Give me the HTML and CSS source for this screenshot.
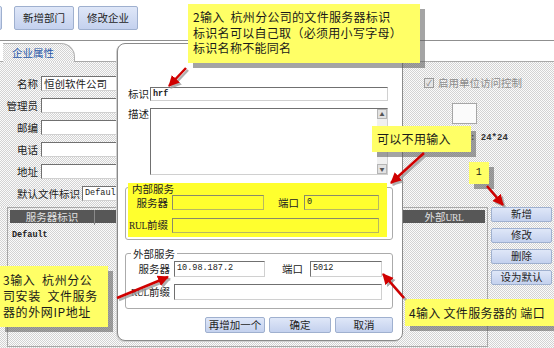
FILE: index.html
```html
<!DOCTYPE html>
<html lang="zh-CN">
<head>
    <meta charset="UTF-8">
    <title>企业属性 - 文件服务器</title>
    <link rel="stylesheet" href="styles.css">
</head>
<body>
<div class="page">
    <div class="toolbar">
        <button class="btn btn-top btn-cut"></button>
        <button class="btn btn-top">新增部门</button>
        <button class="btn btn-top">修改企业</button>
    </div>
    <div class="tabs">
        <div class="tab"><span>企业属性</span></div>
    </div>

    <div class="upper">
        <div class="form dots">
            <div class="frm-row"><label>名称</label><div class="inp">恒创软件公司</div></div>
            <div class="frm-row"><label>管理员</label><div class="inp"></div></div>
            <div class="frm-row"><label>邮编</label><div class="inp"></div></div>
            <div class="frm-row"><label>电话</label><div class="inp"></div></div>
            <div class="frm-row"><label>地址</label><div class="inp"></div></div>
            <div class="frm-row frm-row-wide"><label>默认文件标识</label><div class="inp val">Default</div></div>
        </div>
        <div class="side dots">
            <div class="check-row"><span class="check">&#10003;</span><span>启用单位访问控制</span></div>
            <div class="icon-box"></div>
            <div class="size-text">: 24*24</div>
        </div>
    </div>

    <div class="lower dots">
        <div class="grid">
            <div class="grid-head">
                <div class="gh">服务器标识</div>
                <div class="gh"></div>
                <div class="gh">外部<span class="lat">URL</span></div>
            </div>
            <div class="grid-row val">Default</div>
        </div>
        <div class="actions">
            <button class="btn btn-small">新增</button>
            <button class="btn btn-small">修改</button>
            <button class="btn btn-small">删除</button>
            <button class="btn btn-small">设为默认</button>
        </div>
    </div>

    <!-- 新增文件服务器 对话框 -->
    <div class="dialog">
        <div class="drow">
            <label>标识</label><div class="inp dinp val">hrf</div>
        </div>
        <div class="drow drow-top">
            <label>描述</label>
            <div class="memo">
                <div class="memo-text"></div>
                <div class="memo-bar">
                    <span class="sb-btn">&#9650;</span>
                    <span class="sb-track"></span>
                    <span class="sb-btn">&#9660;</span>
                </div>
            </div>
        </div>

        <div class="group group-inner">
            <div class="hl">
                <div class="legend">内部服务</div>
                <div class="grow">
                    <label class="gl">服务器</label><div class="inp yinp w-srv"></div>
                    <label class="gl-port">端口</label><div class="inp yinp w-port val">0</div>
                </div>
                <div class="grow grow-2">
                    <label class="gl"><span class="lat">RUL</span>前缀</label><div class="inp yinp w-url"></div>
                </div>
            </div>
        </div>

        <div class="group group-outer">
            <div class="legend legend-line">外部服务</div>
            <div class="grow grow-out">
                <label class="gl">服务器</label><div class="inp w-srv2 val">10.98.187.2</div>
                <label class="gl-port2">端口</label><div class="inp w-port2 val">5012</div>
            </div>
            <div class="grow grow-2">
                <label class="gl"><span class="lat">RUL</span>前缀</label><div class="inp w-url2"></div>
            </div>
        </div>

        <div class="dlg-actions">
            <button class="btn btn-dlg b-more">再增加一个</button>
            <button class="btn btn-dlg b-ok">确定</button>
            <button class="btn btn-dlg b-cancel">取消</button>
        </div>
    </div>

    <!-- 说明标注 -->
    <div class="note note-id">2输入&nbsp; 杭州分公司的文件服务器标识<br>标识名可以自己取（必须用小写字母）<br>标识名称不能同名</div>
    <div class="note note-skip">可以不用输入</div>
    <div class="note note-one">1</div>
    <div class="note note-ip">3输入&nbsp; 杭州分公<br>司安装&nbsp; 文件服务<br>器的外网IP地址</div>
    <div class="note note-port">4输入 文件服务器的 端口</div>

    <svg class="arrows" width="554" height="348" viewBox="0 0 554 348">
        <defs>
            <marker id="head" markerUnits="userSpaceOnUse" markerWidth="12" markerHeight="12" refX="10" refY="6" orient="auto">
                <path d="M0,0.5 L11,6 L0,11.5 z" fill="#d00000"/>
            </marker>
            <marker id="head-shadow" markerUnits="userSpaceOnUse" markerWidth="12" markerHeight="12" refX="10" refY="6" orient="auto">
                <path d="M0,0.5 L11,6 L0,11.5 z" fill="#9c9c9c"/>
            </marker>
        </defs>
        <g stroke="#9c9c9c" stroke-width="2.5" marker-end="url(#head-shadow)" opacity="0.8">
            <line x1="188" y1="70" x2="171" y2="88"/>
            <line x1="426" y1="155" x2="393" y2="185"/>
            <line x1="489" y1="188" x2="505" y2="207"/>
            <line x1="119" y1="300" x2="170" y2="279"/>
            <line x1="406" y1="300" x2="385" y2="276"/>
        </g>
        <g stroke="#d00000" stroke-width="2.5" marker-end="url(#head)">
            <line x1="186" y1="68" x2="169" y2="86"/>
            <line x1="424" y1="153" x2="391" y2="183"/>
            <line x1="487" y1="186" x2="503" y2="205"/>
            <line x1="117" y1="298" x2="168" y2="277"/>
            <line x1="404" y1="298" x2="383" y2="274"/>
        </g>
    </svg>
</div>
</body>
</html>
```

FILE: styles.css
```css
* {
    box-sizing: border-box;
}
body {
    margin: 0;
    font-family: "Noto Sans CJK SC", "Liberation Sans", sans-serif;
    font-size: 10.5px;
    line-height: 14px;
    color: #222;
    background: #fff;
}
.page {
    position: relative;
    width: 554px;
    height: 348px;
    overflow: hidden;
    background: #fff;
}
/* точечный фон как в старом интерфейсе */
.dots {
    background: repeating-conic-gradient(#d3d3d3 0 25%, #fbfbfb 0 50%) 0 0 / 2px 2px;
}
.lat {
    font-family: "Liberation Serif", serif;
    font-size: 9.5px;
    letter-spacing: -0.3px;
}

.btn {
    font-family: inherit;
    font-size: 10.5px;
    color: #1e1e1e;
    background: linear-gradient(#dfe7f8, #c4d1ee);
    border: 1px solid #9fb0cf;
    border-radius: 2px;
    padding: 0;
    line-height: 1;
    white-space: nowrap;
    cursor: pointer;
}

.toolbar {
    display: flex;
    gap: 4px;
    height: 41px;
    padding: 6px 0 0 10px;
    border-bottom: 1px solid #8f8f8f;
}
.btn-top {
    width: 60px;
    height: 24px;
}
.btn-cut {
    margin: 0 8px 0 -68px;
}

.tabs {
    height: 21px;
    border-bottom: 1px solid #a9a9a9;
    padding: 2px 0 0 3px;
}
.tab {
    width: 72px;
    height: 19px;
    border-top: 1px solid #b0b0b0;
    border-right: 1px solid #b0b0b0;
    border-top-right-radius: 14px;
    padding: 2px 0 0 9px;
    background: repeating-conic-gradient(#d3d3d3 0 25%, #fbfbfb 0 50%) 0 0 / 2px 2px;
    color: #2857a8;
}

.upper {
    display: flex;
    height: 145px;
}
.form {
    width: 403px;
    padding-top: 14px;
}
.frm-row {
    display: flex;
    height: 22px;
}
.frm-row label {
    width: 41px;
    padding-right: 3px;
    text-align: right;
    line-height: 15px;
    white-space: nowrap;
}
.frm-row .inp {
    width: 200px;
}
.frm-row-wide {
    padding-left: 17px;
}
.frm-row-wide label {
    width: auto;
    padding-right: 2px;
}

.inp {
    height: 15px;
    background: #fff;
    border: 1px solid;
    border-color: #707070 #d0d0d0 #d0d0d0 #707070;
    line-height: 13px;
    padding-left: 2px;
    white-space: nowrap;
    overflow: hidden;
}
.val {
    font-family: "Liberation Mono", "DejaVu Sans Mono", monospace;
    font-size: 8.5px;
}

.side {
    flex: 1;
    padding: 15px 0 0 21px;
    color: #8c8c8c;
}
.check-row {
    display: flex;
    align-items: center;
    gap: 4px;
    height: 12px;
    white-space: nowrap;
}
.check {
    width: 10px;
    height: 10px;
    border: 1px solid #9a9a9a;
    background: #e4e4e4;
    font-size: 8px;
    line-height: 8px;
    text-align: center;
    color: #777;
}
.icon-box {
    width: 25px;
    height: 21px;
    margin: 14px 0 0 28px;
    border: 1px solid #a6a6a6;
    background: #fbfbfb;
}
.size-text {
    margin: 7px 0 0 46px;
    color: #333;
    font-family: "Liberation Mono", monospace;
    font-size: 9px;
    font-weight: bold;
    white-space: nowrap;
}

.lower {
    display: flex;
    height: 141px;
}
.grid {
    width: 481px;
    height: 140px;
    margin-left: 7px;
    border: 1px solid #a7a7a7;
    padding: 2px;
}
.grid-head {
    display: grid;
    grid-template-columns: 85px 1fr 82px;
    height: 13px;
    background: #575757;
    color: #e2e2e2;
}
.gh {
    text-align: center;
    line-height: 13px;
    border-right: 1px solid #8a8a8a;
    white-space: nowrap;
}
.gh:last-child {
    border-right: none;
}
.grid-row {
    padding: 5px 0 0 2px;
    font-weight: bold;
}
.actions {
    display: flex;
    flex-direction: column;
    gap: 6px;
    margin-left: 3px;
}
.btn-small {
    width: 61px;
    height: 15px;
}

/* диалог */
.dialog {
    position: absolute;
    left: 117px;
    top: 43px;
    width: 286px;
    height: 298px;
    padding: 43px 13px 0 10px;
    background: #fff;
    border: 1px solid #8a8a8a;
    border-radius: 8px;
    box-shadow: -1px 1px 0 #d0d0d0;
}
.drow {
    display: flex;
    align-items: center;
}
.drow label {
    width: 22px;
    white-space: nowrap;
}
.dinp {
    width: 238px;
    height: 14px;
    font-weight: bold;
}
.drow-top {
    align-items: flex-start;
    margin-top: 7px;
}
.drow-top label {
    line-height: 12px;
}
.memo {
    display: flex;
    width: 238px;
    height: 67px;
    border: 1px solid;
    border-color: #707070 #d0d0d0 #d0d0d0 #707070;
}
.memo-text {
    flex: 1;
}
.memo-bar {
    display: flex;
    flex-direction: column;
    width: 10px;
    background: #f0f0f0;
}
.sb-btn {
    height: 10px;
    border: 1px solid #b5b5b5;
    background: #e2e2e2;
    font-size: 5px;
    line-height: 8px;
    text-align: center;
    color: #555;
}
.sb-track {
    flex: 1;
}

.group {
    margin: 12px -4px 0 -3px;
    border: 1px solid #ababab;
    border-radius: 3px;
}
.group-inner {
    padding-bottom: 2px;
}
.hl {
    margin: -5px 5px 0 2px;
    padding-bottom: 4px;
    background: #ffff2e;
}
.legend {
    height: 12px;
    line-height: 12px;
    padding-left: 4px;
    white-space: nowrap;
}
.grow {
    display: flex;
    align-items: center;
}
.grow-2 {
    margin-top: 8px;
}
.gl {
    width: 44px;
    padding-right: 4px;
    text-align: right;
    white-space: nowrap;
}
.gl-port {
    width: 40px;
    padding-right: 5px;
    text-align: right;
    white-space: nowrap;
}
.yinp {
    background: transparent;
    border-color: #8a8a6a #b8b860 #b8b860 #8a8a6a;
}
.w-srv { width: 92px; }
.w-port { width: 75px; }
.w-url { width: 207px; }

.group-outer {
    margin-top: 13px;
    padding-bottom: 8px;
}
.legend-line {
    width: fit-content;
    margin: -6px 0 0 5px;
    padding: 0 2px;
    background: #fff;
}
.grow-out {
    margin-top: 1px;
}
.grow-out .inp,
.group-outer .grow-2 .inp {
    height: 16px;
}
.group-outer .gl {
    width: 48px;
}
.gl-port2 {
    width: 45px;
    padding-right: 7px;
    text-align: right;
    white-space: nowrap;
}
.w-srv2 { width: 91px; }
.w-port2 { width: 72px; }
.w-url2 { width: 208px; }
.group-outer .grow-2 {
    margin-top: 7px;
}

.dlg-actions {
    display: flex;
    justify-content: flex-end;
    gap: 4px;
    margin: 8px -4px 0 0;
}
.btn-dlg {
    height: 16px;
}
.b-more { width: 60px; }
.b-ok { width: 62px; }
.b-cancel { width: 58px; }

/* жёлтые пояснения */
.note {
    position: absolute;
    background: #ffff66;
    box-shadow: 5px 5px 0 rgba(90, 90, 90, 0.55);
    font-size: 12px;
    letter-spacing: 0.3px;
    color: #1a1a1a;
    white-space: nowrap;
}
.note-id {
    left: 188px;
    top: 4px;
    width: 232px;
    height: 59px;
    padding: 5px 0 0 5px;
    line-height: 15.5px;
}
.note-skip {
    left: 372px;
    top: 126px;
    width: 99px;
    height: 26px;
    padding-left: 5px;
    line-height: 26px;
}
.note-one {
    left: 469px;
    top: 162px;
    width: 20px;
    height: 22px;
    line-height: 22px;
    text-align: center;
    font-family: "Liberation Mono", monospace;
    font-size: 10px;
}
.note-ip {
    left: 0;
    top: 266px;
    width: 108px;
    height: 61px;
    padding: 6px 0 0 3px;
    line-height: 16px;
    letter-spacing: 0.6px;
}
.note-port {
    left: 405px;
    top: 299px;
    width: 154px;
    height: 27px;
    padding-left: 4px;
    line-height: 27px;
}
.arrows {
    position: absolute;
    left: 0;
    top: 0;
    pointer-events: none;
}
```
